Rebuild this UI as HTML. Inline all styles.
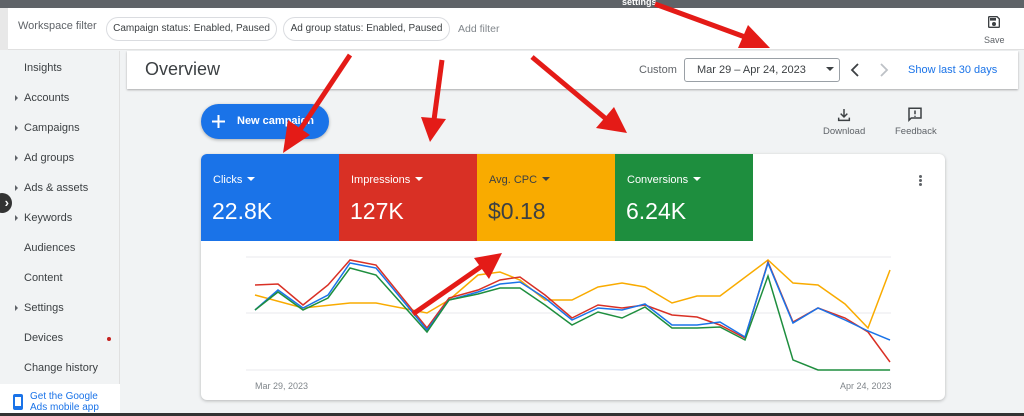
<!DOCTYPE html>
<html><head><meta charset="utf-8"><style>
*{margin:0;padding:0;box-sizing:border-box}
body{width:1024px;height:416px;overflow:hidden;background:#f1f3f4;font-family:"Liberation Sans",Arial,sans-serif;position:relative;color:#3c4043}
.a{position:absolute}
.top{left:0;top:0;width:1024px;height:8px;background:#5f6368}
.hdr{left:0;top:8px;width:1024px;height:42px;background:#fff;border-bottom:1px solid #e0e0e0}
.chip{position:absolute;top:9px;height:24px;border:1px solid #dadce0;border-radius:12px;font-size:10px;line-height:22px;text-align:center;color:#3c4043;white-space:nowrap}
.side{left:0;top:51px;width:120px;height:362px;background:#f1f3f4;border-right:1px solid #e0e0e0}
.si{position:absolute;left:24px;font-size:11px;color:#3c4043}
.tri{position:absolute;left:15px;width:0;height:0;border-left:3px solid #5f6368;border-top:3px solid transparent;border-bottom:3px solid transparent}
.ov{left:127px;top:51px;width:891px;height:38px;background:#fff;box-shadow:0 1px 2px rgba(0,0,0,.3)}
.card{left:201px;top:154px;width:744px;height:246px;background:#fff;border-radius:6px;box-shadow:0 1px 3px rgba(0,0,0,.25);overflow:hidden}
.tile{position:absolute;top:0;height:87px;width:138px;color:#fff}
.tile .l{position:absolute;left:12px;top:20px;font-size:11px}
.tile .v{position:absolute;left:11px;top:44px;font-size:23px}
.caret{display:inline-block;width:0;height:0;border-left:4px solid transparent;border-right:4px solid transparent;border-top:4px solid currentColor;margin-left:5px;vertical-align:2px}
</style></head><body>
<div class="a top"></div>
<div class="a" style="left:622px;top:-3px;font-size:9px;color:#fff;font-weight:bold">settings</div>
<div class="a hdr">
 <div class="a" style="left:0;top:0;width:8px;height:42px;background:#e8e8e8"></div>
 <div class="a" style="left:18px;top:12px;font-size:11px;color:#5f6368">Workspace filter</div>
 <div class="chip" style="left:106px;width:171px">Campaign status: Enabled, Paused</div>
 <div class="chip" style="left:283px;width:167px">Ad group status: Enabled, Paused</div>
 <div class="a" style="left:458px;top:15px;font-size:10.5px;color:#80868b">Add filter</div>
 <svg class="a" style="left:986px;top:6px" width="16" height="16" viewBox="0 0 24 24"><path d="M17 3H5a2 2 0 0 0-2 2v14a2 2 0 0 0 2 2h14a2 2 0 0 0 2-2V7l-4-4zm2 16H5V5h11.2L19 7.8V19zM12 12a3 3 0 1 0 0 6 3 3 0 0 0 0-6zM6 6h9v4H6z" fill="#3c4043"/></svg>
 <div class="a" style="left:984px;top:27px;font-size:9px;color:#5f6368">Save</div>
</div>
<div class="a side">
 <div class="si" style="top:11px">Insights</div>
 <div class="tri" style="top:44px"></div><div class="si" style="top:41px">Accounts</div>
 <div class="tri" style="top:74px"></div><div class="si" style="top:71px">Campaigns</div>
 <div class="tri" style="top:104px"></div><div class="si" style="top:101px">Ad groups</div>
 <div class="tri" style="top:134px"></div><div class="si" style="top:131px">Ads &amp; assets</div>
 <div class="tri" style="top:164px"></div><div class="si" style="top:161px">Keywords</div>
 <div class="si" style="top:191px">Audiences</div>
 <div class="si" style="top:221px">Content</div>
 <div class="tri" style="top:254px"></div><div class="si" style="top:251px">Settings</div>
 <div class="si" style="top:281px">Devices</div>
 <div class="a" style="left:107px;top:286px;width:4px;height:4px;border-radius:2px;background:#c5221f"></div>
 <div class="si" style="top:311px">Change history</div>
 <div class="a" style="left:0;top:333px;width:120px;height:30px;background:#fff"></div>
 <div class="a" style="left:13px;top:343px;width:10px;height:16px;border-radius:2px;background:#1a73e8"><div style="position:absolute;left:2px;top:3px;width:6px;height:9px;background:#fff"></div></div>
 <div class="a" style="left:30px;top:340px;font-size:10px;line-height:11px;color:#1a73e8">Get the Google<br>Ads mobile app</div>
</div>
<div class="a" style="left:-8px;top:193px;width:20px;height:20px;border-radius:10px;background:#333;color:#fff;font-size:13px;line-height:20px;text-align:right;padding-right:3px;font-weight:bold">›</div>
<div class="a ov">
 <div class="a" style="left:18px;top:8px;font-size:18px;color:#3c4043">Overview</div>
 <div class="a" style="left:512px;top:13px;font-size:11px;color:#5f6368">Custom</div>
 <div class="a" style="left:557px;top:7px;width:156px;height:24px;border:1px solid #9aa0a6;border-radius:3px;font-size:11px;line-height:22px;padding-left:12px;color:#3c4043">Mar 29 – Apr 24, 2023<span class="caret" style="margin-left:20px;color:#3c4043"></span></div>
 <svg class="a" style="left:721px;top:11px" width="14" height="16" viewBox="0 0 14 16"><path d="M10 2L4 8l6 6" stroke="#3c4043" stroke-width="1.8" fill="none"/></svg>
 <svg class="a" style="left:750px;top:11px" width="14" height="16" viewBox="0 0 14 16"><path d="M4 2l6 6-6 6" stroke="#bdc1c6" stroke-width="1.8" fill="none"/></svg>
 <div class="a" style="left:781px;top:13px;font-size:11px;color:#1a73e8">Show last 30 days</div>
</div>
<div class="a" style="left:201px;top:104px;width:128px;height:35px;border-radius:18px;background:#1a73e8;color:#fff;box-shadow:0 1px 3px rgba(0,0,0,.3)">
 <svg class="a" style="left:11px;top:11px" width="13" height="13"><path d="M6.5 0v13M0 6.5h13" stroke="#fff" stroke-width="2"/></svg>
 <div class="a" style="left:36px;top:11px;font-size:11px;font-weight:bold">New campaign</div>
</div>
<svg class="a" style="left:836px;top:107px" width="16" height="16" viewBox="0 0 24 24"><path d="M12 3v11M7 10l5 5 5-5M4 16v4h16v-4" stroke="#3c4043" stroke-width="2.2" fill="none"/></svg>
<div class="a" style="left:823px;top:126px;font-size:9.5px;color:#5f6368">Download</div>
<svg class="a" style="left:906px;top:106px" width="18" height="18" viewBox="0 0 24 24"><path d="M4 3h16v13H7l-3 3z" stroke="#3c4043" stroke-width="2" fill="none"/><path d="M12 6v5M12 13v1.5" stroke="#3c4043" stroke-width="2"/></svg>
<div class="a" style="left:895px;top:126px;font-size:9.5px;color:#5f6368">Feedback</div>
<div class="a card">
 <div class="tile" style="left:0;background:#1a73e8"><div class="l">Clicks<span class="caret"></span></div><div class="v">22.8K</div></div>
 <div class="tile" style="left:138px;background:#d93025"><div class="l">Impressions<span class="caret"></span></div><div class="v">127K</div></div>
 <div class="tile" style="left:276px;background:#f9ab00;color:#3c4043"><div class="l">Avg. CPC<span class="caret"></span></div><div class="v">$0.18</div></div>
 <div class="tile" style="left:414px;background:#1e8e3e"><div class="l">Conversions<span class="caret"></span></div><div class="v">6.24K</div></div>
 <div class="a" style="left:718px;top:21px;width:3px;height:3px;border-radius:2px;background:#5f6368;box-shadow:0 4px 0 #5f6368,0 8px 0 #5f6368"></div>
 <div class="a" style="left:54px;top:227px;font-size:9px;color:#80868b">Mar 29, 2023</div>
 <div class="a" style="left:639px;top:227px;font-size:9px;color:#80868b">Apr 24, 2023</div>
</div>
<svg class="a" style="left:0;top:0" width="1024" height="416">
 <g stroke="#e8eaed" stroke-width="1"><line x1="246" y1="257" x2="891" y2="257"/><line x1="246" y1="313" x2="891" y2="313"/><line x1="246" y1="370" x2="891" y2="370"/></g>
 <g fill="none" stroke-width="1.5">
 <polyline stroke="#f9ab00" points="255,295 303,308 350,303 376,303 412,310 427,313 449,300 478,275 500,272 520,280 545,300 572,300 598,287 622,283 645,287 672,303 697,296 720,296 768,260 793,283 818,285 845,304 868,328 890,270"/>
 <polyline stroke="#d93025" points="255,285 278,284 303,305 328,285 350,260 376,265 427,328 449,298 478,290 500,280 520,277 545,295 572,318 598,305 622,308 645,305 672,315 697,317 720,325 745,338 768,262 793,322 818,308 845,318 868,332 890,362"/>
 <polyline stroke="#1a73e8" points="255,310 278,290 303,308 328,295 350,263 376,268 427,330 449,300 478,292 500,284 520,282 545,298 572,320 598,308 622,310 645,304 672,325 697,325 720,322 745,337 768,263 793,323 818,308 845,320 868,331 890,340"/>
 <polyline stroke="#1e8e3e" points="255,310 278,292 303,310 328,298 350,268 376,275 427,332 449,300 478,294 500,288 520,288 545,305 572,325 598,312 622,318 645,307 672,328 697,328 720,327 745,340 768,276 793,360 818,370 890,370"/>
 </g>
 <g stroke="#e41b17" stroke-width="5" fill="#e41b17">
 <line x1="350" y1="55" x2="298" y2="133"/><polygon stroke="none" points="283,153 288,120 310,135"/>
 <line x1="442" y1="60" x2="434" y2="120"/><polygon stroke="none" points="430,142 421,117 446,119"/>
 <line x1="532" y1="57" x2="605" y2="118"/><polygon stroke="none" points="627,133 596,128 614,107"/>
 <line x1="655" y1="4" x2="745" y2="37"/><polygon stroke="none" points="770,48 738,48 748,25"/>
 <line x1="413" y1="314" x2="482" y2="266"/><polygon stroke="none" points="502,253 489,279 474,258"/>
 </g>
 <rect x="0" y="413" width="1024" height="3" fill="#333"/>
</svg>
</body></html>
